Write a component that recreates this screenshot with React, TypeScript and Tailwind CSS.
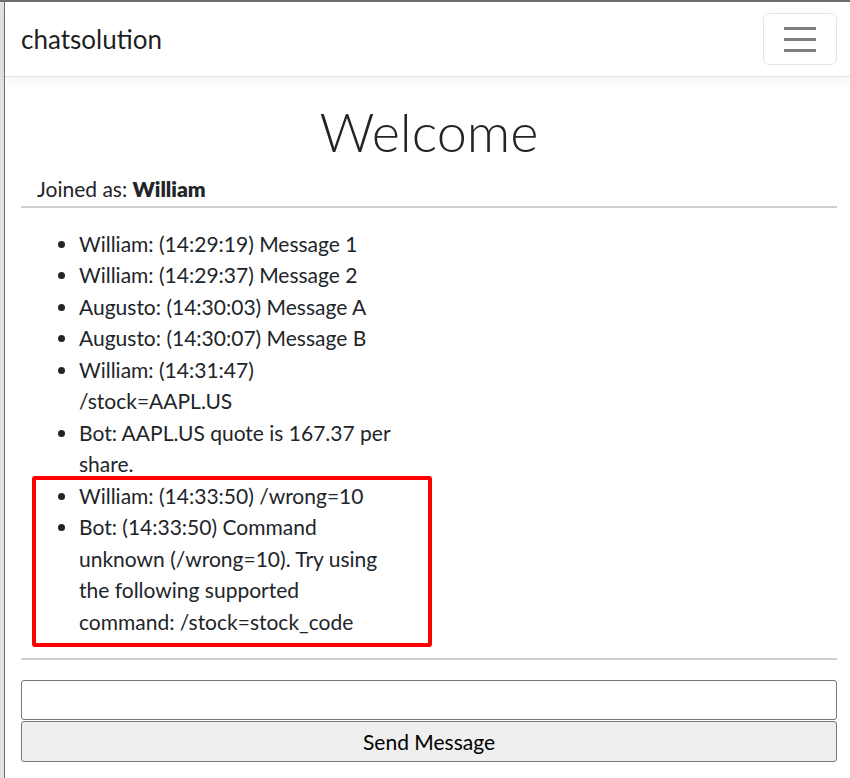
import React from 'react';

const messages = [
  'William: (14:29:19) Message 1',
  'William: (14:29:37) Message 2',
  'Augusto: (14:30:03) Message A',
  'Augusto: (14:30:07) Message B',
  'William: (14:31:47) /stock=AAPL.US',
  'Bot: AAPL.US quote is 167.37 per share.',
  'William: (14:33:50) /wrong=10',
  'Bot: (14:33:50) Command unknown (/wrong=10). Try using the following supported command: /stock=stock_code',
];

export default function App() {
  return (
    <div
      className="w-[850px] h-[778px] overflow-hidden bg-white border-t-2 border-[#6e6e6e] flex text-[#212529]"
      style={{ fontFamily: 'Lato, "Open Sans", sans-serif' }}
    >
      <div className="w-[4px] shrink-0 bg-[#e2e2e2]" />
      <div className="flex-1 border-l border-[#6e6e6e] flex flex-col">
        {/* navbar */}
        <nav className="h-[75px] shrink-0 flex items-center justify-between pl-[16px] pr-[13px] border-b border-[#e0e0e0] shadow-[0_4px_12px_rgba(0,0,0,0.05)]">
          <span className="text-[26px] text-black/90">chatsolution</span>
          <button className="w-[74px] h-[52px] border border-[#e4e4e4] rounded-[6px] flex items-center justify-center">
            <svg width="32" height="26" viewBox="0 0 32 26">
              <path d="M0 2.5h32M0 13.5h32M0 24.5h32" stroke="#7f7f7f" strokeWidth="3" />
            </svg>
          </button>
        </nav>

        <main className="pl-[16px] pr-[13px]">
          <h1 className="mt-[20px] text-[54px] leading-[70px] font-light text-center">Welcome</h1>
          <p className="mt-[6px] pl-[16px] text-[21px] leading-[31.5px]">
            Joined as: <b className="font-extrabold">William</b>
          </p>
          <div className="mt-[1px] h-[2px] bg-[#cfcfcf]" />

          <div className="relative mt-[20px]">
            <ul className="w-[372px] pl-[58px] list-disc text-[21px] leading-[31.5px]">
              {messages.map((m, i) => (
                <li key={i}>{m}</li>
              ))}
            </ul>
            <div className="absolute left-[11px] top-[248px] w-[400px] h-[171px] border-4 border-[#ff0000] rounded-[3px]" />
          </div>

          <div className="mt-[21px] h-[2px] bg-[#cfcfcf]" />

          <input className="mt-[20px] block w-full h-[40px] border border-[#767676] rounded-[3px] px-2 text-[21px]" />
          <button className="mt-[1px] block w-full h-[41px] bg-[#efefef] border border-[#767676] rounded-[3px] text-[21px] text-black">
            Send Message
          </button>
        </main>
      </div>
    </div>
  );
}
